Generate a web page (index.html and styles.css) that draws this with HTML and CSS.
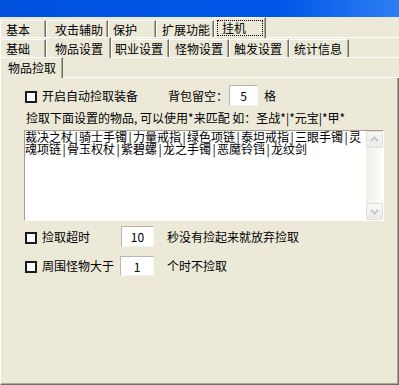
FILE: index.html
```html
<!DOCTYPE html>
<html lang="zh-CN">
<head>
  <meta charset="UTF-8" />
  <title>挂机 - 物品捡取</title>
  <link rel="stylesheet" href="styles.css">
</head>
<body>
  <div class="titlebar"></div>

  <div class="tabs row-main">
    <span class="tab w-basic">基本</span>
    <span class="tab w-attack">攻击辅助</span>
    <span class="tab w-protect">保护</span>
    <span class="tab w-ext">扩展功能</span>
    <span class="tab active w-hang"><span class="focus">挂机</span></span>
  </div>

  <div class="tabs row-sub">
    <span class="tab s-base">基础</span>
    <span class="tab active s-item">物品设置</span>
    <span class="tab s-job">职业设置</span>
    <span class="tab s-mon">怪物设置</span>
    <span class="tab s-trig">触发设置</span>
    <span class="tab s-stat">统计信息</span>
  </div>

  <div class="tabs row-inner">
    <span class="tab active i-pick">物品捡取</span>
  </div>

  <div class="panel">
    <div class="line line-auto">
      <span class="check"></span>
      <span class="label">开启自动捡取装备</span>
      <span class="bag">背包留空：</span>
      <span class="field f-bag">5</span>
      <span class="unit">格</span>
    </div>

    <div class="hint">捡取下面设置的物品, 可以使用*来匹配 如：圣战*|*元宝|*甲*</div>

    <div class="memo">
      <div class="memo-text">
        <div>裁决之杖<i>|</i>骑士手镯<i>|</i>力量戒指<i>|</i>绿色项链<i>|</i>泰坦戒指<i>|</i>三眼手镯<i>|</i>灵</div>
        <div>魂项链<i>|</i>骨玉权杖<i>|</i>紫碧螺<i>|</i>龙之手镯<i>|</i>恶魔铃铛<i>|</i>龙纹剑</div>
      </div>
      <div class="scroll">
        <span class="arrow">
          <svg width="15" height="15" viewBox="0 0 15 15"><polyline points="4,9 7.5,5.5 11,9" fill="none" stroke="#c2c8d2" stroke-width="2"/></svg>
        </span>
        <span class="track"></span>
        <span class="arrow">
          <svg width="15" height="15" viewBox="0 0 15 15"><polyline points="4,6 7.5,9.5 11,6" fill="none" stroke="#c2c8d2" stroke-width="2"/></svg>
        </span>
      </div>
    </div>

    <div class="line line-timeout">
      <span class="check"></span>
      <span class="label l-timeout">捡取超时</span>
      <span class="field f-timeout">10</span>
      <span class="after">秒没有捡起来就放弃捡取</span>
    </div>

    <div class="line line-mob">
      <span class="check"></span>
      <span class="label l-mob">周围怪物大于</span>
      <span class="field f-mob">1</span>
      <span class="after">个时不捡取</span>
    </div>
  </div>
</body>
</html>
```

FILE: styles.css
```css
body {
  margin: 0;
  width: 399px;
  height: 385px;
  overflow: hidden;
  background-color: #ece9d8;
  font-family: "Noto Sans CJK SC", "Liberation Sans", sans-serif;
  font-size: 12px;
  line-height: 12px;
  color: #000;
}

.titlebar {
  height: 17px;
  background: linear-gradient(to right, #0050de 0%, #0057e8 70%, #2f7ef3 100%);
}

/* tab strips */
.tabs {
  display: flex;
  align-items: flex-end;
  border-bottom: 1px solid #fff;
  box-sizing: border-box;
}
.row-main { height: 21px; }
.row-sub { height: 20px; }
.row-inner { height: 20px; }

.tab {
  box-sizing: border-box;
  height: 17px;
  padding-top: 3px;
  border-top: 1px solid #fff;
  border-left: 1px solid #fff;
  border-right: 1px solid #716f64;
  box-shadow: inset -1px 0 #aca899;
  white-space: nowrap;
}
.tab.active {
  height: 21px;
  margin-bottom: -1px;
  padding-top: 4px;
  background-color: #ece9d8;
  position: relative;
}

.w-basic { width: 46px; padding-left: 5px; }
.w-attack { width: 62px; padding-left: 8px; }
.w-protect { width: 48px; padding-left: 4px; }
.w-ext { width: 58px; padding-left: 5px; }
.w-hang { width: 52px; padding-left: 2px; }
.focus {
  display: inline-block;
  border: 1px dotted #000;
  padding: 1px 16px 1px 4px;
  margin-top: -2px;
}

.row-sub .tab { height: 18px; }
.row-sub .tab.active { height: 21px; padding-top: 5px; }
.s-base { width: 46px; padding-left: 5px; }
.s-item { width: 65px; padding-left: 8px; }
.s-job { width: 58px; padding-left: 3px; }
.s-mon { width: 60px; padding-left: 5px; }
.s-trig { width: 60px; padding-left: 4px; }
.s-stat { width: 60px; padding-left: 4px; }

.row-inner .tab.active { height: 21px; padding-top: 4px; }
.i-pick { width: 63px; padding-left: 7px; }

/* page body */
.panel {
  height: 307px;
  box-sizing: border-box;
  padding: 7px 0 0 25px;
  border-left: 1px solid #fff;
  border-right: 1px solid #716f64;
  border-bottom: 1px solid #716f64;
  box-shadow: inset -1px -1px #aca899;
}

.line {
  display: flex;
  align-items: center;
  white-space: nowrap;
}
.line-auto { height: 21px; margin-left: -1px; }
.line-timeout { height: 21px; margin-top: 5px; margin-left: -1px; }
.line-mob { height: 20px; margin-top: 9px; margin-left: -1px; }

.check {
  width: 8px;
  height: 8px;
  border: 2px solid #1a1a1a;
  background-color: #fff;
  margin-right: 5px;
  margin-top: 2px;
}
.bag { margin-left: 30px; }
.unit { margin-left: 6px; }
.after { margin-left: 13px; }
.l-timeout { width: 79px; }
.l-mob { width: 78px; }

.field {
  box-sizing: border-box;
  height: 100%;
  padding-top: 4px;
  text-align: center;
  background-color: #fff;
  border-top: 1px solid #b9b6a9;
  border-left: 1px solid #b9b6a9;
  border-right: 1px solid #f4f3ee;
  border-bottom: 1px solid #f4f3ee;
}
.f-bag { width: 29px; margin-left: 1px; }
.f-timeout { width: 33px; }
.f-mob { width: 34px; }

.hint {
  margin-top: 6px;
  height: 12px;
  white-space: nowrap;
}

.memo {
  display: flex;
  width: 360px;
  height: 91px;
  box-sizing: border-box;
  margin: 6px 0 0 -2px;
  background-color: #fff;
  border-top: 1px solid #a19f94;
  border-left: 1px solid #a19f94;
  border-right: 1px solid #fff;
  border-bottom: 1px solid #fff;
}
.memo-text {
  flex: 1;
  white-space: nowrap;
}
.memo-text i {
  font-style: normal;
  display: inline-block;
  width: 6px;
  text-align: center;
}

.scroll {
  width: 17px;
  display: flex;
  flex-direction: column;
  background: linear-gradient(to right, #f1efe6, #fdfdfa);
}
.track { flex: 1; }
.arrow {
  box-sizing: border-box;
  width: 17px;
  height: 17px;
  border: 1px solid #e2e0d6;
  border-radius: 2px;
  background: linear-gradient(#f7f7f4, #ecebe5);
  display: flex;
  align-items: center;
  justify-content: center;
}
```
